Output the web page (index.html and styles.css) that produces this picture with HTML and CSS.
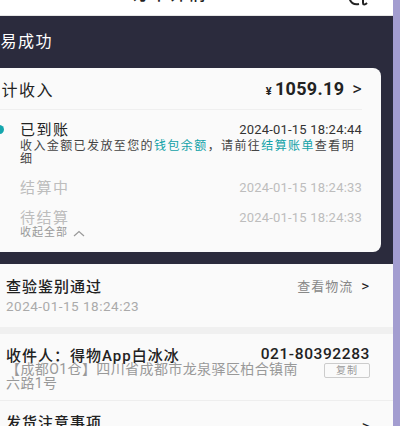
FILE: index.html
```html
<!DOCTYPE html>
<html lang="zh-CN">
<head>
    <meta charset="UTF-8">
    <meta name="viewport" content="width=device-width, initial-scale=1.0">
    <title>订单详情</title>
    <link rel="stylesheet" href="styles.css">
</head>
<body>
    <div class="screen">
        <div class="topBar">
            <span class="pageTitle">订单详情</span>
            <svg class="topIcon" width="22" height="16" viewBox="0 0 22 16">
                <path d="M2 -6 C2 4 8 5 12 4 M16 -2 L16 3 C16 5 18 5 20 3" fill="none" stroke="#222" stroke-width="2"/>
            </svg>
        </div>

        <div class="hero">
            <div class="heroTitle">交易成功</div>

            <div class="incomeCard">
                <div class="incomeHead">
                    <span class="incomeLabel">累计收入</span>
                    <span class="incomeTotal"><small>¥</small>1059.19<i class="arrow">&gt;</i></span>
                </div>

                <div class="step done">
                    <div class="stepRow">
                        <span class="stepName">已到账</span>
                        <span class="stepTime">2024-01-15 18:24:44</span>
                    </div>
                    <p class="stepNote">收入金额已发放至您的<a>钱包余额</a>，请前往<a>结算账单</a>查看明细</p>
                </div>
                <div class="step">
                    <div class="stepRow">
                        <span class="stepName">结算中</span>
                        <span class="stepTime">2024-01-15 18:24:33</span>
                    </div>
                </div>
                <div class="step">
                    <div class="stepRow">
                        <span class="stepName">待结算</span>
                        <span class="stepTime">2024-01-15 18:24:33</span>
                    </div>
                </div>
                <div class="foldAll">
                    收起全部
                    <svg class="caret" width="12" height="7" viewBox="0 0 12 7">
                        <polyline points="1,6 6,1.5 11,6" fill="none" stroke="#999" stroke-width="1.2"/>
                    </svg>
                </div>
            </div>
        </div>

        <div class="block">
            <div class="lineRow">
                <span class="blockTitle">查验鉴别通过</span>
                <span class="blockLink">查看物流<i class="arrow">&gt;</i></span>
            </div>
            <div class="blockTime">2024-01-15 18:24:23</div>
        </div>

        <div class="gap"></div>

        <div class="block address">
            <div class="lineRow">
                <span class="blockTitle">收件人：得物App白冰冰</span>
                <span class="phone">021-80392283</span>
            </div>
            <div class="addrRow">
                <span class="addrText">【成都O1仓】四川省成都市龙泉驿区柏合镇南六路1号</span>
                <span class="copyBtn">复制</span>
            </div>
        </div>

        <div class="block notice">
            <div class="lineRow">
                <span class="blockTitle">发货注意事项</span>
                <i class="arrow">&gt;</i>
            </div>
        </div>
    </div>
</body>
</html>
```

FILE: styles.css
```css
html, body {
    margin: 0;
    height: 100%;
    overflow: hidden;
    background-color: #a39dd0;
}

.screen {
    margin-left: -24px;
    width: 417px;
    height: 100%;
    background-color: #fafafa;
    font-family: Roboto, "Noto Sans CJK SC", sans-serif;
    color: #222;
}

/* nav bar, scrolled almost out of view */
.topBar {
    position: relative;
    height: 15px;
    overflow: hidden;
    background-color: #fff;
    border-bottom: 1px solid #e6e6e6;
}
.pageTitle {
    display: block;
    width: 100px;
    margin: -15px 0 0 155px;
    font-size: 18px;
    line-height: 18px;
    letter-spacing: 1px;
    font-weight: 500;
}
.topIcon {
    position: absolute;
    right: 24px;
    top: 0;
}

.hero {
    background-color: #2b2b3d;
    padding: 14px 12px 12px 7px;
}
.heroTitle {
    color: #fff;
    font-size: 16px;
    line-height: 24px;
    letter-spacing: 1.5px;
}

.incomeCard {
    margin: 14px 0 0 -8px;
    padding: 0 19px 12px 9px;
    background-color: #fafafa;
    border-radius: 8px;
}
.incomeHead {
    display: flex;
    justify-content: space-between;
    align-items: center;
    height: 41px;
    border-bottom: 1px solid #efefef;
}
.incomeLabel {
    font-size: 16px;
    letter-spacing: 1.5px;
}
.incomeTotal {
    font-size: 18px;
    font-weight: 700;
    letter-spacing: 0.3px;
}
.incomeTotal small {
    font-size: 11px;
    margin-right: 3px;
}
.arrow {
    font-style: normal;
    font-weight: 400;
    margin-left: 8px;
}

.step {
    position: relative;
    padding-left: 36px;
}
.stepRow {
    display: flex;
    justify-content: space-between;
    align-items: center;
    height: 30px;
    line-height: 18px;
}
.step.done {
    padding-top: 9px;
}
.step.done .stepRow {
    height: 21px;
}
.step.done::before {
    content: "";
    position: absolute;
    left: 11px;
    top: 15px;
    width: 9px;
    height: 9px;
    border-radius: 50%;
    background-color: #15a6ad;
}
.stepName {
    font-size: 15px;
    letter-spacing: 1.5px;
    color: #bdbdbd;
}
.step.done .stepName {
    color: #222;
}
.stepTime {
    font-size: 13px;
    letter-spacing: 0.2px;
    color: #bdbdbd;
}
.step.done .stepTime {
    color: #333;
}
.stepNote {
    margin: 0 0 8px;
    font-size: 12px;
    line-height: 12.5px;
    letter-spacing: 1.4px;
    color: #444;
}
.stepNote a {
    color: #13a2a8;
}
.foldAll {
    display: flex;
    align-items: center;
    margin: -7px 0 0 36px;
    font-size: 11px;
    line-height: 14px;
    letter-spacing: 1px;
    color: #999;
}
.caret {
    margin-left: 5px;
}

.block {
    padding: 8px 23px 0 30px;
    background-color: #fafafa;
}
.lineRow {
    display: flex;
    justify-content: space-between;
    align-items: center;
    height: 26px;
}
.blockTitle {
    font-size: 15px;
    font-weight: 500;
    letter-spacing: 1px;
}
.blockLink {
    font-size: 13px;
    letter-spacing: 1px;
    color: #888;
}
.blockLink .arrow {
    color: #222;
    font-size: 15px;
}
.blockTime {
    font-size: 13.5px;
    letter-spacing: 0.5px;
    color: #aaa;
    padding-bottom: 13px;
}

.gap {
    height: 7px;
    background-color: #f0f0f0;
}

.address {
    padding-top: 10px;
    padding-bottom: 10px;
    border-bottom: 1px solid #eee;
}
.address .lineRow {
    height: 20px;
}
.phone {
    font-size: 15.5px;
    font-weight: 500;
    letter-spacing: 0.6px;
}
.addrRow {
    display: flex;
    justify-content: space-between;
    align-items: flex-start;
    margin-top: -2px;
}
.addrText {
    width: 296px;
    font-size: 14px;
    line-height: 14px;
    letter-spacing: 0.4px;
    color: #999;
}
.copyBtn {
    margin-top: 1px;
    padding: 0 11px;
    font-size: 10px;
    line-height: 13px;
    letter-spacing: 1px;
    color: #999;
    border: 1px solid #ccc;
    border-radius: 2px;
}

.notice {
    padding-top: 7px;
}
.notice .arrow {
    margin-top: 10px;
}
```
